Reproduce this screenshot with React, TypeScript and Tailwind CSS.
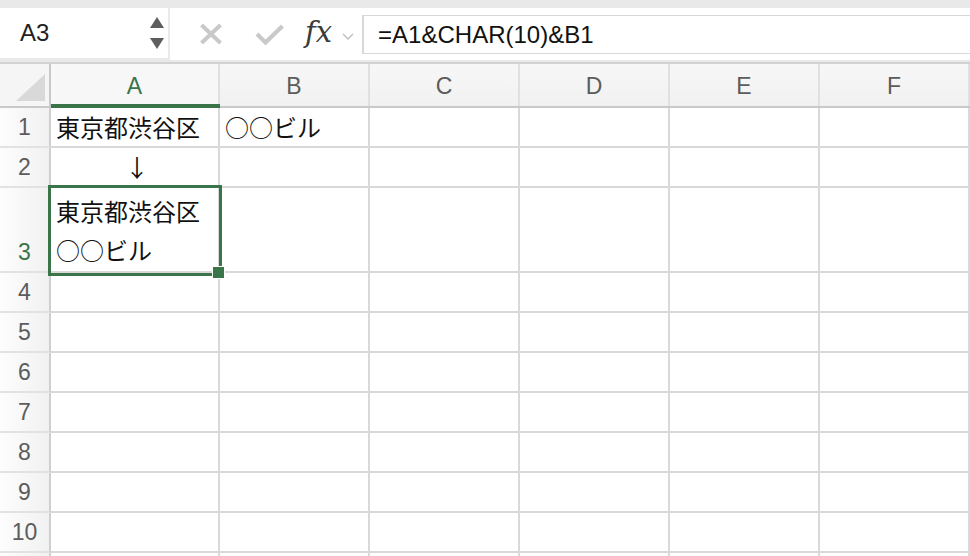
import React from "react";

const GREEN = "#3a7449";

const cols = [
  { key: "A", w: "w-[169px]" },
  { key: "B", w: "w-[150px]" },
  { key: "C", w: "w-[150px]" },
  { key: "D", w: "w-[150px]" },
  { key: "E", w: "w-[150px]" },
  { key: "F", w: "w-[150px]" },
];

const rows: { n: string; h: string; cells: Record<string, React.ReactNode> }[] = [
  { n: "1", h: "h-[40px]", cells: { A: "東京都渋谷区", B: "○○ビル" } },
  { n: "2", h: "h-[40px]", cells: { A: <span className="block w-full text-center">↓</span> } },
  {
    n: "3",
    h: "h-[85px]",
    cells: {
      A: (
        <span className="block leading-[39px] pb-[2px]">
          東京都渋谷区
          <br />
          ○○ビル
        </span>
      ),
    },
  },
  { n: "4", h: "h-[40px]", cells: {} },
  { n: "5", h: "h-[40px]", cells: {} },
  { n: "6", h: "h-[40px]", cells: {} },
  { n: "7", h: "h-[40px]", cells: {} },
  { n: "8", h: "h-[40px]", cells: {} },
  { n: "9", h: "h-[40px]", cells: {} },
  { n: "10", h: "h-[40px]", cells: {} },
  { n: "", h: "h-[40px]", cells: {} },
];

const cjk = { fontFamily: '"Noto Sans CJK JP", "Noto Sans", sans-serif' };
const latin = { fontFamily: '"Liberation Sans", "Noto Sans", Arial, sans-serif' };

export default function App() {
  return (
    <div className="relative w-[970px] h-[556px] overflow-hidden bg-white select-none">
      {/* Top toolbar */}
      <div className="h-[64px] bg-[#e9e9e9] pt-[8px] flex items-start border-b-2 border-[#d2d2d2]">
        {/* Name box */}
        <div className="w-[168px] h-[50px] bg-white flex items-center justify-between pl-[20px] pr-[2px]">
          <span className="text-[24px] text-[#1f1f1f]" style={latin}>
            A3
          </span>
          <div className="flex flex-col items-center gap-[10px] w-[16px] mr-[1px]">
            <svg width="14" height="11" viewBox="0 0 14 11">
              <polygon points="7,0 14,11 0,11" fill="#5e5e5e" />
            </svg>
            <svg width="14" height="11" viewBox="0 0 14 11">
              <polygon points="0,0 14,0 7,11" fill="#5e5e5e" />
            </svg>
          </div>
        </div>
        {/* Formula toolbar */}
        <div className="ml-[2px] flex-1 h-[52px] bg-white flex items-center">
          <div className="ml-[29px] flex items-center">
            <svg width="24" height="22" viewBox="0 0 24 22">
              <path d="M2.5 2 L21.5 20 M21.5 2 L2.5 20" stroke="#c9c9c9" strokeWidth="4" fill="none" />
            </svg>
          </div>
          <div className="ml-[32px] flex items-center">
            <svg width="30" height="21" viewBox="0 0 30 21">
              <path d="M2 10 L10.5 18.5 L27.5 2" stroke="#c9c9c9" strokeWidth="4.2" fill="none" />
            </svg>
          </div>
          <span
            className="ml-[20px] italic text-[29px] leading-none text-[#3b3b3b] -mt-[4px]"
            style={{ fontFamily: '"DejaVu Serif", "Liberation Serif", serif' }}
          >
            fx
          </span>
          <svg className="ml-[10px] mt-[5px]" width="12" height="8" viewBox="0 0 12 8">
            <path d="M1 1 L6 6 L11 1" stroke="#c2c2c2" strokeWidth="1.5" fill="none" />
          </svg>
          <div className="ml-[8px] flex-1 h-[39px] mt-[1px] border-l-2 border-t border-b border-[#d8d8d8] flex items-center pl-[14px]">
            <span className="text-[24px] text-[#111]" style={latin}>
              =A1&amp;CHAR(10)&amp;B1
            </span>
          </div>
        </div>
      </div>

      {/* Column header row */}
      <div className="flex h-[44px] bg-[#f5f5f5] border-b-2 border-[#c9c9c9]">
        <div className="w-[51px] h-full border-r-2 border-[#c9c9c9] flex items-end justify-end pr-[4px] pb-[5px]">
          <svg width="29" height="27" viewBox="0 0 29 27">
            <polygon points="29,0 29,27 0,27" fill="#d9d9d9" />
          </svg>
        </div>
        {cols.map((c) => (
          <div
            key={c.key}
            className={`${c.w} h-full border-r-2 border-[#e0e0e0] flex items-center justify-center relative ${
              c.key === "A" ? "bg-[#f7f7f7]" : "bg-gradient-to-b from-[#f7f7f7] to-[#f1f1f1]"
            }`}
          >
            <span
              className="text-[23px] pt-[2px]"
              style={{ ...latin, color: c.key === "A" ? GREEN : "#5c5c5c" }}
            >
              {c.key}
            </span>
            {c.key === "A" && (
              <div className="absolute left-0 right-[-2px] bottom-[-2px] h-[4px] bg-[#3a7449]" />
            )}
          </div>
        ))}
      </div>

      {/* Rows */}
      {rows.map((r, i) => (
        <div key={i} className={`flex ${r.h}`}>
          <div className="w-[51px] h-full border-r-2 border-b-2 border-[#cfcfcf] border-b-[#e2e2e2] bg-gradient-to-r from-[#fdfdfd] to-[#f1f1f1] flex items-end justify-center">
            <span
              className="text-[23px] leading-[38px]"
              style={{ ...latin, color: r.n === "3" ? GREEN : "#5c5c5c" }}
            >
              {r.n}
            </span>
          </div>
          {cols.map((c) => (
            <div
              key={c.key}
              className={`${c.w} h-full border-r-2 border-b-2 border-[#d9d9d9] flex items-end pl-[5px] overflow-hidden whitespace-nowrap`}
            >
              <span className="text-[24px] leading-[38px] text-[#111] w-full" style={cjk}>
                {r.cells[c.key] ?? ""}
              </span>
            </div>
          ))}
        </div>
      ))}

      {/* Selection */}
      <div className="absolute left-[48px] top-[185px] w-[174px] h-[91px] border-[3px] border-[#3a7449] pointer-events-none" />
      <div className="absolute left-[213px] top-[267px] w-[11px] h-[11px] bg-[#3a7449] outline outline-1 outline-white" />
    </div>
  );
}
